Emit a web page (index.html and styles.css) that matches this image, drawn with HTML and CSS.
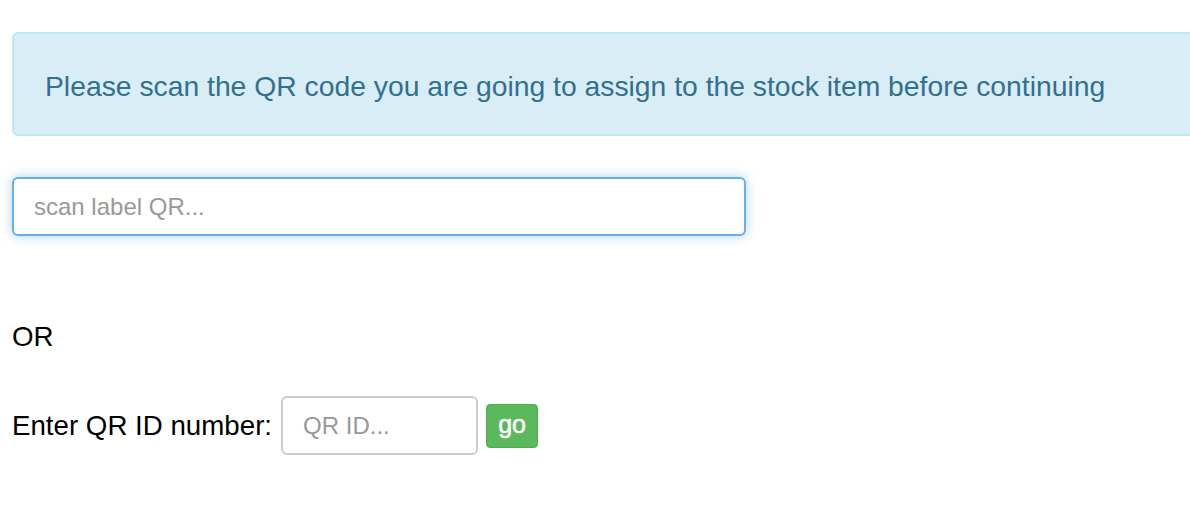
FILE: index.html
```html
<!DOCTYPE html>
<html>
<head>
<meta charset="utf-8">
<link rel="stylesheet" href="styles.css">
</head>
<body>
<div class="page">
  <div class="alert">Please scan the QR code you are going to assign to the stock item before continuing</div>
  <input class="scan" type="text" placeholder="scan label QR...">
  <div class="or">OR</div>
  <div class="manual">
    <label class="label">Enter QR ID number:</label>
    <input class="qrid" type="text" placeholder="QR ID...">
    <button class="go">go</button>
  </div>
</div>
</body>
</html>
```

FILE: styles.css
```css
html, body {
  margin: 0;
  padding: 0;
  background: #fff;
  overflow: hidden;
}
body {
  font-family: "Liberation Sans", Arial, sans-serif;
  color: #000;
}
.page {
  padding: 32px 0 0 12px;
  width: 1220px;
}
.alert {
  box-sizing: border-box;
  height: 104px;
  background: #d9edf7;
  border: 2px solid #bce8f1;
  border-radius: 6px;
  color: #31708f;
  font-size: 28.3px;
  display: flex;
  align-items: center;
  padding: 4px 0 0 31px;
}
.scan {
  display: block;
  box-sizing: border-box;
  margin-top: 41px;
  width: 734px;
  height: 59px;
  border: 2px solid #66afe9;
  border-radius: 6px;
  outline: none;
  box-shadow: 0 0 12px rgba(102, 175, 233, 0.55);
  padding: 0 20px;
  font-family: "Liberation Sans", Arial, sans-serif;
  font-size: 24px;
  color: #555;
}
.scan::placeholder, .qrid::placeholder {
  color: #999;
}
.or {
  margin-top: 86px;
  font-size: 27.7px;
  line-height: 30px;
}
.manual {
  margin-top: 44px;
  display: flex;
  align-items: center;
}
.label {
  font-size: 27.7px;
  margin-right: 9px;
}
.qrid {
  box-sizing: border-box;
  width: 197px;
  height: 59px;
  border: 2px solid #ccc;
  border-radius: 6px;
  outline: none;
  padding: 0 20px;
  font-family: "Liberation Sans", Arial, sans-serif;
  font-size: 24px;
  color: #555;
}
.go {
  margin-left: 8px;
  box-sizing: border-box;
  width: 52px;
  height: 44px;
  background: #5cb85c;
  border: 1px solid #4cae4c;
  border-radius: 4px;
  color: #fff;
  font-family: "Liberation Sans", Arial, sans-serif;
  font-size: 25px;
  font-weight: normal;
  -webkit-text-stroke: 0.5px #fff;
  padding: 0 0 3px;
}
```
